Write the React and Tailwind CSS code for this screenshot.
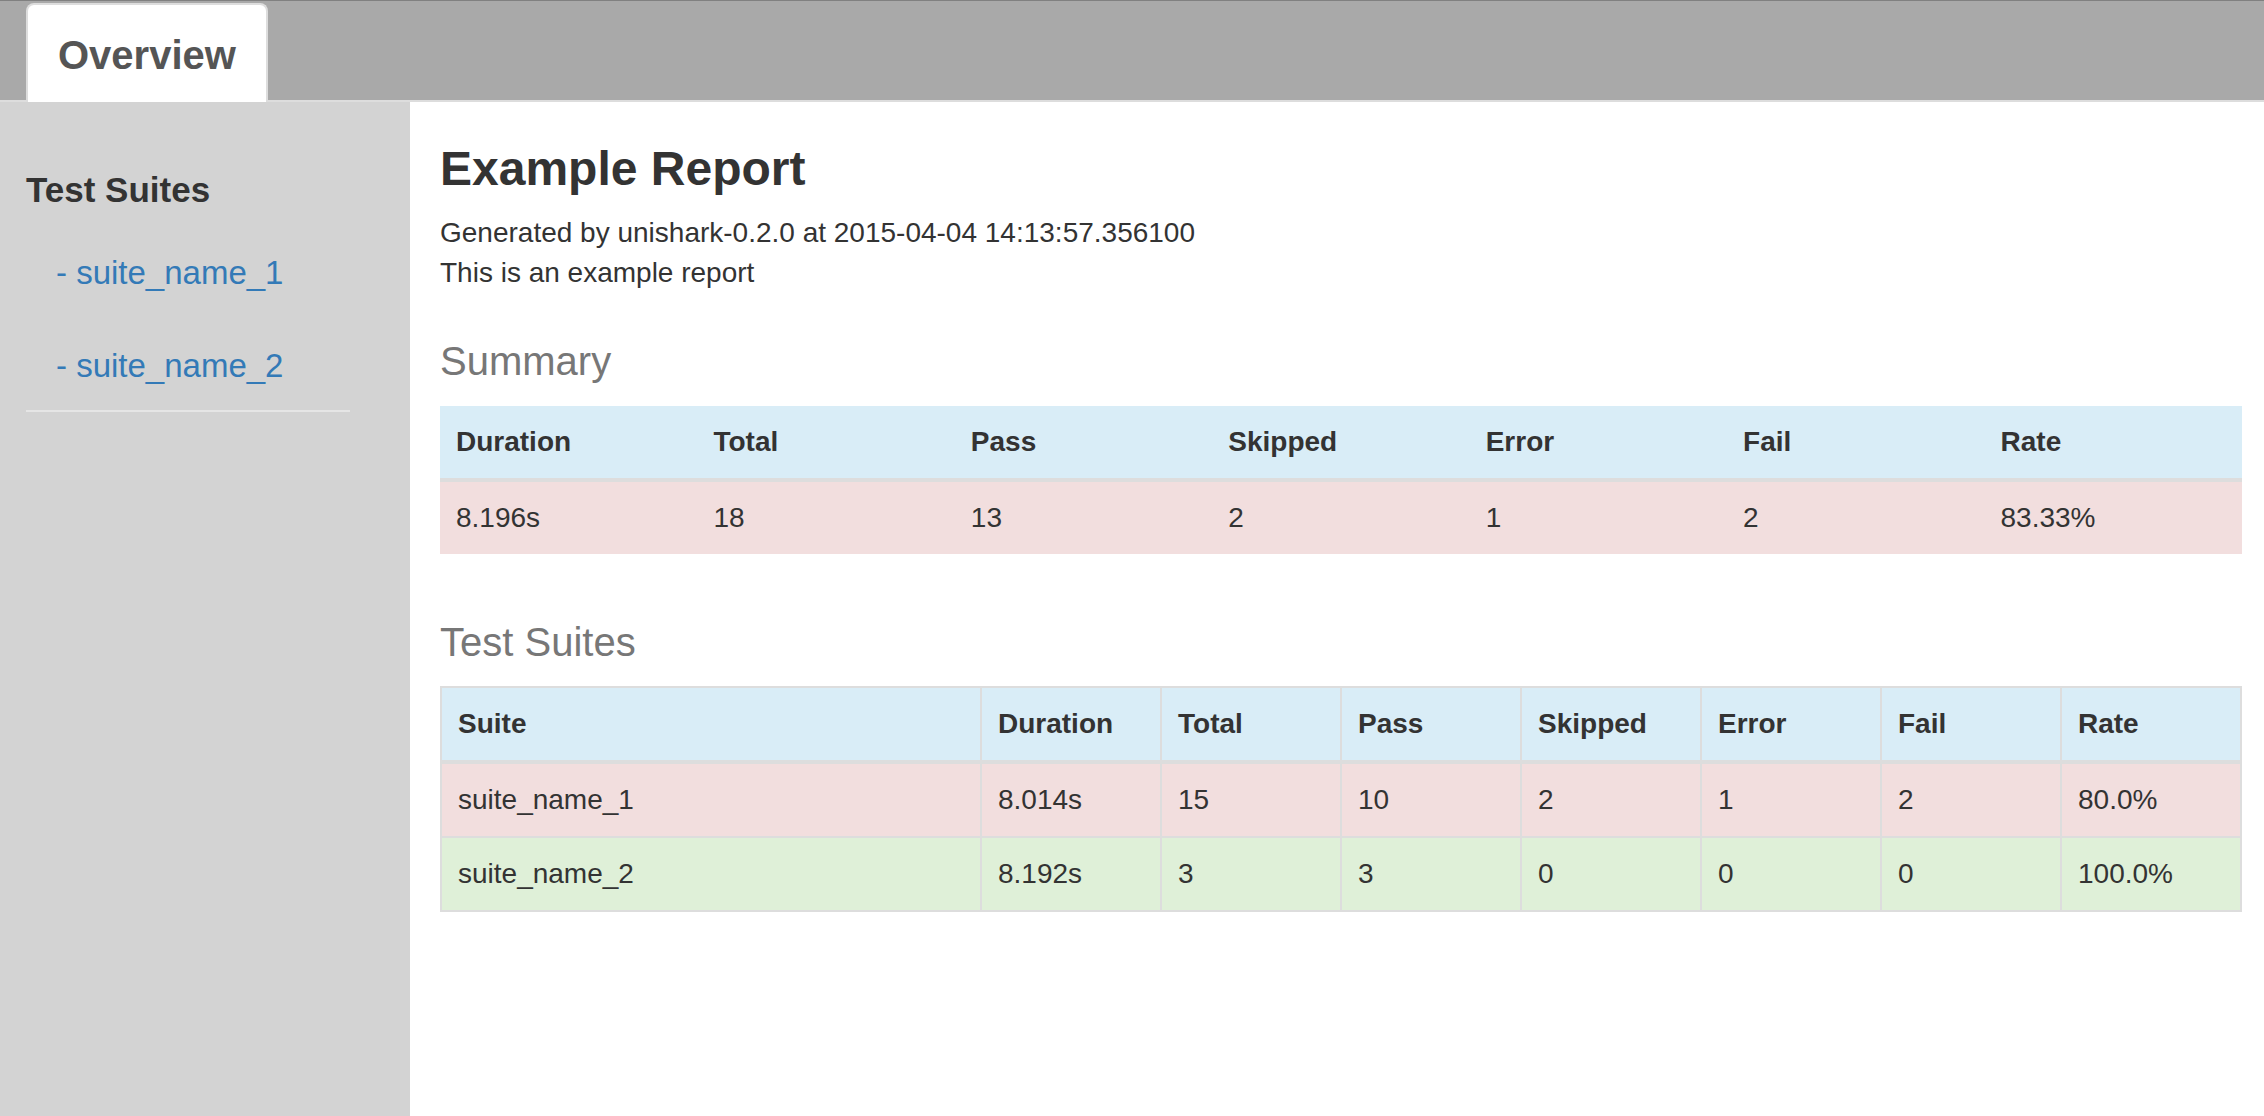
import React from "react";

const font = { fontFamily: '"Liberation Sans", Arial, Helvetica, sans-serif' };

function SummaryTable() {
  const heads = ["Duration", "Total", "Pass", "Skipped", "Error", "Fail", "Rate"];
  const row = ["8.196s", "18", "13", "2", "1", "2", "83.33%"];
  return (
    <table className="w-full table-fixed border-collapse text-[28px] leading-[40px] text-[#333]">
      <thead>
        <tr className="bg-[#d9edf7]">
          {heads.map((h) => (
            <th key={h} className="px-[16px] py-[16px] text-left font-bold border-b-[4px] border-[#ddd]">
              {h}
            </th>
          ))}
        </tr>
      </thead>
      <tbody>
        <tr className="bg-[#f2dede]">
          {row.map((c, i) => (
            <td key={i} className="px-[16px] py-[16px] font-normal">
              {c}
            </td>
          ))}
        </tr>
      </tbody>
    </table>
  );
}

function SuitesTable() {
  const heads = ["Suite", "Duration", "Total", "Pass", "Skipped", "Error", "Fail", "Rate"];
  const rows = [
    { bg: "bg-[#f2dede]", cells: ["suite_name_1", "8.014s", "15", "10", "2", "1", "2", "80.0%"] },
    { bg: "bg-[#dff0d8]", cells: ["suite_name_2", "8.192s", "3", "3", "0", "0", "0", "100.0%"] },
  ];
  return (
    <table className="w-full table-fixed border-collapse border-[2px] border-[#ddd] text-[28px] leading-[40px] text-[#333]">
      <colgroup>
        <col className="w-[30%]" />
        <col className="w-[10%]" />
        <col className="w-[10%]" />
        <col className="w-[10%]" />
        <col className="w-[10%]" />
        <col className="w-[10%]" />
        <col className="w-[10%]" />
        <col className="w-[10%]" />
      </colgroup>
      <thead>
        <tr className="bg-[#d9edf7]">
          {heads.map((h) => (
            <th
              key={h}
              className="px-[16px] py-[16px] text-left font-bold border-[2px] border-b-[4px] border-[#ddd]"
            >
              {h}
            </th>
          ))}
        </tr>
      </thead>
      <tbody>
        {rows.map((r, ri) => (
          <tr key={ri} className={r.bg}>
            {r.cells.map((c, i) => (
              <td key={i} className="px-[16px] py-[16px] border-[2px] border-[#ddd]">
                {c}
              </td>
            ))}
          </tr>
        ))}
      </tbody>
    </table>
  );
}

export default function App() {
  return (
    <div style={font} className="min-h-screen flex flex-col bg-white">
      {/* Top nav */}
      <div className="border-t border-[#808080] bg-[#a9a9a9] border-b-[2px] border-b-[#dddddd] pl-[26px] pt-[2px] flex items-end">
        <div className="-mb-[2px] bg-white border-[2px] border-b-0 border-[#dddddd] rounded-t-[8px] px-[30px] pt-[22px] pb-[18px] text-[40px] leading-[57px] font-bold text-[#555]">
          Overview
        </div>
      </div>

      <div className="flex flex-1">
        {/* Sidebar */}
        <div className="w-[410px] shrink-0 bg-[#d3d3d3] pl-[26px] pr-[60px] pt-[68px]">
          <h4 className="text-[35px] leading-[40px] font-bold text-[#333]">Test Suites</h4>
          <div className="mt-[17px]">
            <a href="#" className="block pl-[30px] pt-[23px] pb-[24px] text-[33px] leading-[46px] text-[#337ab7]">
              - suite_name_1
            </a>
            <a href="#" className="block pl-[30px] pt-[23px] pb-[21px] text-[33px] leading-[46px] text-[#337ab7]">
              - suite_name_2
            </a>
          </div>
          <div className="h-[2px] bg-[#e5e5e5]"></div>
        </div>

        {/* Main */}
        <div className="flex-1 pl-[30px] pr-[22px] pt-[40px]">
          <h3 className="text-[48px] leading-[53px] font-bold text-[#333]">Example Report</h3>
          <div className="mt-[18px] text-[28px] leading-[40px] text-[#333]">
            <div>Generated by unishark-0.2.0 at 2015-04-04 14:13:57.356100</div>
            <div>This is an example report</div>
          </div>

          <h3 className="mt-[46px] text-[40px] leading-[44px] font-normal text-[#777]">Summary</h3>
          <div className="mt-[23px]">
            <SummaryTable />
          </div>

          <h3 className="mt-[66px] text-[40px] leading-[44px] font-normal text-[#777]">Test Suites</h3>
          <div className="mt-[22px]">
            <SuitesTable />
          </div>
        </div>
      </div>
    </div>
  );
}
